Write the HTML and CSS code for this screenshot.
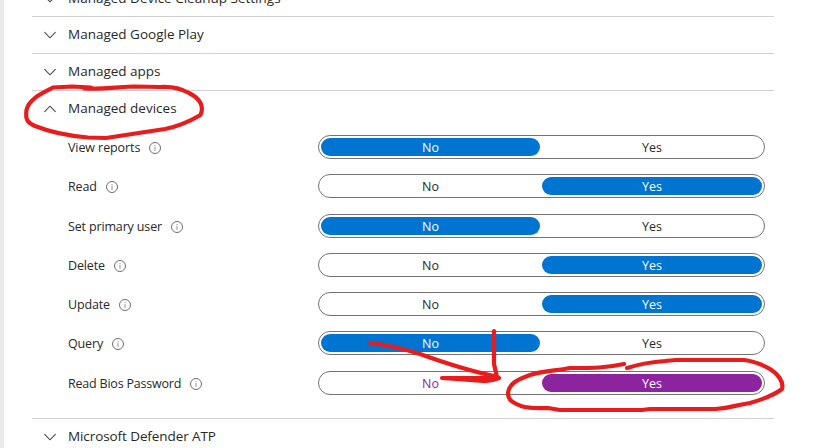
FILE: index.html
```
<!DOCTYPE html>
<html lang="en">
<head>
<meta charset="utf-8">
<title>Permissions</title>
<link rel="stylesheet" href="styles.css">
</head>
<body>
<svg class="defs" aria-hidden="true">
  <symbol id="down" viewBox="0 0 12 8"><path d="M.4 1.200 6 6.800l5.600-5.600"/></symbol>
  <symbol id="up" viewBox="0 0 12 8"><path d="M.4 6.800 6 1.200l5.600 5.600"/></symbol>
  <symbol id="info" viewBox="0 0 12 12"><circle cx="6" cy="6" r="5.500"/><path class="stem" d="M6 5v4M6 3v1.200"/></symbol>
</svg>
<main class="panel">
  <section class="group"><h2 class="head"><svg class="chevron"><use href="#down"/></svg><span>Managed Device Cleanup Settings</span></h2></section>
  <section class="group"><h2 class="head"><svg class="chevron"><use href="#down"/></svg><span>Managed Google Play</span></h2></section>
  <section class="group"><h2 class="head"><svg class="chevron"><use href="#down"/></svg><span>Managed apps</span></h2></section>
  <section class="group">
    <h2 class="head"><svg class="chevron"><use href="#up"/></svg><span>Managed devices</span></h2>
    <div class="rows">
      <div class="row"><div class="label"><span class="snug">View reports</span><svg class="info"><use href="#info"/></svg></div><div class="toggle"><span class="option on">No</span><span class="option">Yes</span></div></div>
      <div class="row"><div class="label"><span class="tight">Read</span><svg class="info"><use href="#info"/></svg></div><div class="toggle"><span class="option">No</span><span class="option on">Yes</span></div></div>
      <div class="row"><div class="label"><span class="tight">Set primary user</span><svg class="info"><use href="#info"/></svg></div><div class="toggle"><span class="option on">No</span><span class="option">Yes</span></div></div>
      <div class="row"><div class="label"><span class="tight">Delete</span><svg class="info"><use href="#info"/></svg></div><div class="toggle"><span class="option">No</span><span class="option on">Yes</span></div></div>
      <div class="row"><div class="label"><span class="tight">Update</span><svg class="info"><use href="#info"/></svg></div><div class="toggle"><span class="option">No</span><span class="option on">Yes</span></div></div>
      <div class="row"><div class="label"><span class="tight">Query</span><svg class="info"><use href="#info"/></svg></div><div class="toggle"><span class="option on">No</span><span class="option">Yes</span></div></div>
      <div class="row"><div class="label"><span class="tighter">Read Bios Password</span><svg class="info"><use href="#info"/></svg></div><div class="toggle changed"><span class="option">No</span><span class="option on">Yes</span></div></div>
    </div>
  </section>
  <section class="group"><h2 class="head"><svg class="chevron"><use href="#down"/></svg><span class="snug">Microsoft Defender ATP</span></h2></section>
</main>
<svg class="ink" viewBox="0 0 839 448" aria-hidden="true">
  <path d="M91 87.500 72 86.500 53 87.500C45 92 29 98 26.500 110C25 120 28 123 35 126C50 132 70 136 88 137.500L106 138C120 136 145 132 165 129C180 126 192 120 200.500 115C204 107 201 99 189 93C180 88 172 86 160 87L134 86.500C120 87 105 89 84 88.500"/>
  <path d="M370 343C390 345 404 349 420 354C445 363 470 371 494 376M494 331V364L497 377L499 378C489 382 482 381 470 380L442 378H499"/>
  <path d="M624 364C605 368 595 368 570 368C556 371 545 370 530 375C516 380 509 384 508 393C508 401 514 403 521 406C531 409 538 408 548 408L560 410H642L650 409H716C732 408 735 405 750 403C764 399 774 395 782 389C784 382 778 374 770 369C761 364 754 361 744 360H676L665 361C650 362 640 364 627 368"/>
</svg>
</body>
</html>
```
FILE: styles.css
```
* { box-sizing: border-box; }
body { margin: 0; height: 448px; overflow: hidden; background: #fff; color: #292827; font-family: "Open Sans", sans-serif; position: relative; }
.defs { position: absolute; width: 0; height: 0; }
.panel { height: 448px; overflow: hidden; border-left: 4px solid #eaeaea; padding: 0 65px 0 28px; }
.group { border-top: 1px solid #d2d0ce; }
.group:first-child { margin-top: -21px; }
.head { display: flex; align-items: center; height: 36px; margin: 0; padding: 0 0 2px 12px; font-size: 13.500px; font-weight: 400; line-height: 20px; white-space: nowrap; }
.group:first-child .head { padding-bottom: 0; }
.chevron { width: 12px; height: 8px; margin: 1px 12px 0 0; fill: none; stroke: #484644; stroke-width: 1.1; }
.rows { height: 291px; padding: .4px 0 0 36px; }
.row { display: flex; align-items: center; height: 39.250px; }
.label { display: flex; align-items: center; width: 250px; padding-top: 2px; font-size: 12.500px; line-height: 18px; white-space: nowrap; }
.snug { letter-spacing: -.09px; }
.tight { letter-spacing: -.15px; }
.tighter { letter-spacing: -.21px; }
.info { width: 12px; height: 12px; margin-left: 9px; fill: none; stroke: #706e6c; stroke-width: 1; }
.stem { stroke: #979593; }
.toggle { display: grid; grid-template-columns: 219px 220px; gap: 2px; width: 447px; height: 24px; padding: 2px; border: 1px solid #737373; border-radius: 12px; font-size: 12.500px; }
.option { height: 18px; border-radius: 9px; line-height: 20px; text-align: center; }
.on { background: #0074d1; color: #fff; }
.changed .option { color: #8d249f; }
.changed .on { background: #8d249f; color: #fff; }
.ink { position: absolute; left: 0; top: 0; width: 839px; height: 448px; fill: none; stroke: #e81c1c; stroke-width: 4.200; stroke-linecap: round; stroke-linejoin: round; pointer-events: none; }
```
